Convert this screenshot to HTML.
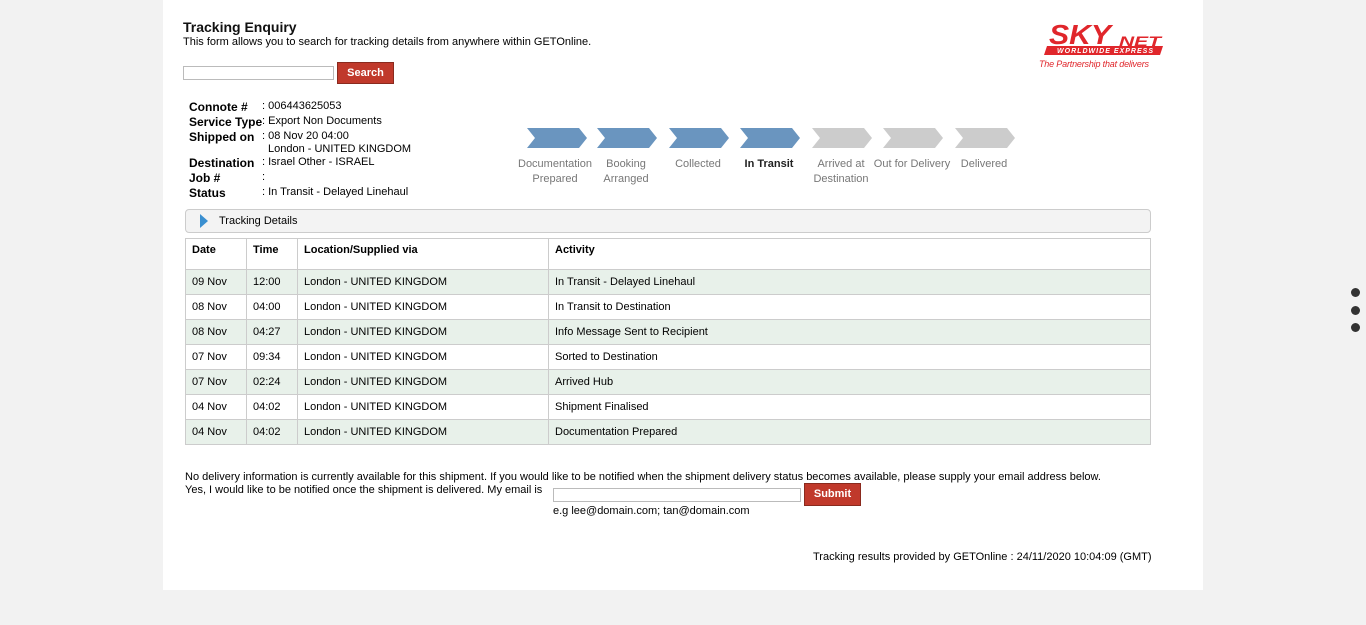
<!DOCTYPE html>
<html><head><style>
body{margin:0;background:#f2f2f2;font-family:"Liberation Sans",Arial,sans-serif;font-size:12px;color:#000;}
#page{position:absolute;left:163px;top:0;width:1040px;height:590px;background:#fff;}
.abs{position:absolute;}
h1{position:absolute;left:20px;top:19px;margin:0;font-size:14px;font-weight:bold;color:#111;}
.lbl{font-weight:bold;font-size:12px;white-space:nowrap}
.step{position:absolute;top:157px;width:90px;text-align:center;font-size:11px;color:#777;line-height:15px;}
table{border-collapse:collapse;position:absolute;left:22px;top:238px;width:966px;table-layout:fixed}
td{border:1px solid #ccc;padding:0 6px;height:24px;vertical-align:top;font-size:11px;line-height:13px;overflow:hidden}
td div{margin-top:6px;height:14px;overflow:hidden}
tr.h td{height:30px;font-weight:bold;}
tr.h td div{margin-top:5px}
.g td{background:#e8f1ea}
</style></head><body>
<div id="page">
<h1>Tracking Enquiry</h1>
<div class="abs" style="left:20px;top:36px;font-size:11px">This form allows you to search for tracking details from anywhere within GETOnline.</div>
<div class="abs" style="left:20px;top:66px;width:149px;height:12px;border:1px solid #bbb"></div>
<div class="abs" style="left:174px;top:62px;width:55px;height:20px;background:#c0392b;border:1px solid #8a2a1e;color:#fff;font-weight:bold;font-size:11px;text-align:center;line-height:20px">Search</div>
<svg class="abs" style="left:872px;top:20px" width="135" height="52">
<text x="14" y="24" font-family="Liberation Sans" font-weight="bold" font-style="italic" font-size="28" fill="#e0262b" textLength="62" lengthAdjust="spacingAndGlyphs">SKY</text>
<text x="84" y="26" font-family="Liberation Sans" font-weight="bold" font-style="italic" font-size="14" fill="#e0262b" textLength="42" lengthAdjust="spacingAndGlyphs">NET</text>
<polygon points="12,26 128,26 125,35 9,35" fill="#e0262b"/>
<text x="22" y="33" font-family="Liberation Sans" font-weight="bold" font-style="italic" font-size="7" fill="#fff" textLength="96">WORLDWIDE EXPRESS</text>
<text x="4" y="47" font-family="Liberation Sans" font-style="italic" font-size="9" fill="#e0262b" textLength="110">The Partnership that delivers</text>
</svg>
<div class="abs" style="left:26px;top:100px;line-height:15px">
<div class="lbl" style="position:absolute;top:0">Connote #</div>
<div class="lbl" style="position:absolute;top:15px">Service Type</div>
<div class="lbl" style="position:absolute;top:30px">Shipped on</div>
<div class="lbl" style="position:absolute;top:56px">Destination</div>
<div class="lbl" style="position:absolute;top:71px">Job #</div>
<div class="lbl" style="position:absolute;top:86px">Status</div>
</div>
<div class="abs" style="left:99px;top:99px;line-height:15px;font-size:11px;white-space:nowrap">
<div>: 006443625053</div><div>: Export Non Documents</div><div>: 08 Nov 20 04:00</div><div style="padding-left:6px;line-height:11px">London - UNITED KINGDOM</div><div>: Israel Other - ISRAEL</div><div>:</div><div>: In Transit - Delayed Linehaul</div>
</div>
<svg class="abs" style="left:364px;top:128px" width="500" height="20">
<g fill="#6a95bf"><polygon points="0,0 52,0 60,10 52,20 0,20 8,10"/><polygon transform="translate(70)" points="0,0 52,0 60,10 52,20 0,20 8,10"/><polygon transform="translate(142)" points="0,0 52,0 60,10 52,20 0,20 8,10"/><polygon transform="translate(213)" points="0,0 52,0 60,10 52,20 0,20 8,10"/></g>
<g fill="#cccccc"><polygon transform="translate(285)" points="0,0 52,0 60,10 52,20 0,20 8,10"/><polygon transform="translate(356)" points="0,0 52,0 60,10 52,20 0,20 8,10"/><polygon transform="translate(428)" points="0,0 52,0 60,10 52,20 0,20 8,10"/></g>
</svg>
<div class="step" style="left:347px">Documentation Prepared</div>
<div class="step" style="left:418px">Booking<br>Arranged</div>
<div class="step" style="left:490px">Collected</div>
<div class="step" style="left:561px;color:#222;font-weight:bold">In Transit</div>
<div class="step" style="left:633px">Arrived at Destination</div>
<div class="step" style="left:704px">Out for Delivery</div>
<div class="step" style="left:776px">Delivered</div>
<div class="abs" style="left:22px;top:209px;width:964px;height:22px;border:1px solid #ccc;border-radius:4px;background:#f3f3f3"></div>
<svg class="abs" style="left:37px;top:214px" width="8" height="14"><polygon points="0,0 8,7 0,14" fill="#3a8fd0"/></svg>
<div class="abs" style="left:56px;top:215px;font-size:11px">Tracking Details</div>
<table>
<colgroup><col style="width:61px"><col style="width:51px"><col style="width:251px"><col></colgroup>
<tr class="h"><td><div>Date</div></td><td><div>Time</div></td><td><div>Location/Supplied via</div></td><td><div>Activity</div></td></tr>
<tr class="g"><td><div>09 Nov 20</div></td><td><div>12:00</div></td><td><div>London - UNITED KINGDOM</div></td><td><div>In Transit - Delayed Linehaul</div></td></tr>
<tr><td><div>08 Nov 20</div></td><td><div>04:00</div></td><td><div>London - UNITED KINGDOM</div></td><td><div>In Transit to Destination</div></td></tr>
<tr class="g"><td><div>08 Nov 20</div></td><td><div>04:27</div></td><td><div>London - UNITED KINGDOM</div></td><td><div>Info Message Sent to Recipient</div></td></tr>
<tr><td><div>07 Nov 20</div></td><td><div>09:34</div></td><td><div>London - UNITED KINGDOM</div></td><td><div>Sorted to Destination</div></td></tr>
<tr class="g"><td><div>07 Nov 20</div></td><td><div>02:24</div></td><td><div>London - UNITED KINGDOM</div></td><td><div>Arrived Hub</div></td></tr>
<tr><td><div>04 Nov 20</div></td><td><div>04:02</div></td><td><div>London - UNITED KINGDOM</div></td><td><div>Shipment Finalised</div></td></tr>
<tr class="g"><td><div>04 Nov 20</div></td><td><div>04:02</div></td><td><div>London - UNITED KINGDOM</div></td><td><div>Documentation Prepared</div></td></tr>
</table>
<div class="abs" style="left:22px;top:471px;font-size:11px">No delivery information is currently available for this shipment. If you would like to be notified when the shipment delivery status becomes available, please supply your email address below.</div>
<div class="abs" style="left:22px;top:484px;font-size:11px">Yes, I would like to be notified once the shipment is delivered. My email is</div>
<div class="abs" style="left:390px;top:488px;width:246px;height:12px;border:1px solid #bbb"></div>
<div class="abs" style="left:641px;top:483px;width:55px;height:21px;background:#c0392b;border:1px solid #8a2a1e;color:#fff;font-weight:bold;font-size:11px;text-align:center;line-height:21px">Submit</div>
<div class="abs" style="left:390px;top:505px;font-size:11px">e.g lee@domain.com; tan@domain.com</div>
<div class="abs" style="left:650px;top:551px;font-size:11px">Tracking results provided by GETOnline : 24/11/2020 10:04:09 (GMT)</div>
</div>
<div class="abs" style="left:1351px;top:288px;width:9px;height:9px;border-radius:50%;background:#333"></div>
<div class="abs" style="left:1351px;top:306px;width:9px;height:9px;border-radius:50%;background:#333"></div>
<div class="abs" style="left:1351px;top:323px;width:9px;height:9px;border-radius:50%;background:#333"></div>
</body></html>
